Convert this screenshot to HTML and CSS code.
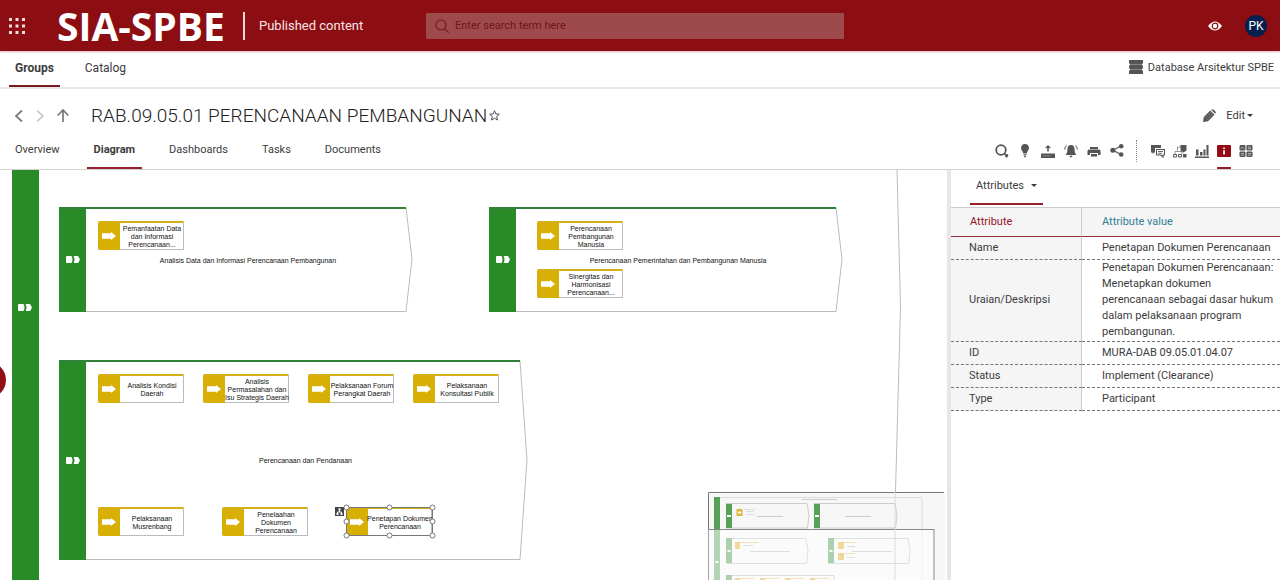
FILE: index.html
```html
<!DOCTYPE html>
<html lang="id">
<head>
<meta charset="utf-8">
<title>SIA-SPBE | Published content</title>
<link rel="stylesheet" href="styles.css">
</head>
<body>
<svg class="defs" aria-hidden="true">
  <symbol id="arrow" viewBox="0 0 14 8"><path d="M0 1.2h9V0l5 4-5 4V6.800H0z" fill="#fff"/></symbol>
  <symbol id="chain" viewBox="0 0 14 7"><path d="M1 0h4.500q2 3.500 0 7H1Q0 7 0 6V1Q0 0 1 0zM7.500 0h4q1 0 1.500 1.500L14 3.500 13 5.500Q12.500 7 11.500 7h-4q2-3.500 0-7z" fill="#fff"/></symbol>
</svg>
<div class="page">
  <header class="topbar">
    <button class="apps" aria-label="Applications">
      <svg width="16" height="16" viewBox="0 0 16 16" fill="#f6dcdc"><path d="M0 0h3v3H0zM6.500 0h3v3h-3zM13 0h3v3h-3zM0 6.500h3v3H0zM6.500 6.500h3v3h-3zM13 6.500h3v3h-3zM0 13h3v3H0zM6.500 13h3v3h-3zM13 13h3v3h-3z"/></svg>
    </button>
    <span class="logo">SIA-SPBE</span>
    <span class="section">Published content</span>
    <label class="search">
      <svg width="14" height="14" viewBox="0 0 14 14" fill="none" stroke="#741318" stroke-width="1.100"><circle cx="6" cy="6" r="5"/><path d="M9.600 9.600l4 4"/></svg>
      <input type="text" placeholder="Enter search term here" aria-label="Search">
    </label>
    <button class="eye" aria-label="View mode">
      <svg width="14" height="10" viewBox="0 0 14 10"><path d="M0 5Q7-4 14 5 7 14 0 5z" fill="#fff"/><circle cx="7" cy="5" r="2.800" fill="none" stroke="#8c0d12" stroke-width="1.200"/></svg>
    </button>
    <button class="avatar">PK</button>
  </header>

  <nav class="mainnav">
    <a class="navlink navlink-on" href="#">Groups</a>
    <a class="navlink" href="#">Catalog</a>
    <a class="database" href="#">
      <svg width="14" height="14" viewBox="0 0 14 14" fill="#555"><path d="M0 0h14v3l-1.500 1.500L14 6v2l-1.500 1.500L14 11v3H0v-3l1.500-1.500L0 8V6l1.500-1.500L0 3z"/><path d="M2 4.500h10M2 9.500h10" stroke="#999" stroke-width=".7"/></svg>
      Database Arsitektur SPBE
    </a>
  </nav>

  <section class="titlebar">
    <div class="history">
      <button aria-label="Back"><svg width="8" height="12" viewBox="0 0 8 12" fill="none" stroke="#777" stroke-width="1.700"><path d="M7 .5L1 6l6 5.500"/></svg></button>
      <button aria-label="Forward"><svg width="8" height="12" viewBox="0 0 8 12" fill="none" stroke="#ccc" stroke-width="1.700"><path d="M1 .5L7 6l-6 5.500"/></svg></button>
      <button aria-label="Up"><svg width="12" height="13" viewBox="0 0 12 13" fill="none" stroke="#777" stroke-width="1.700"><path d="M6 13V1M.7 6.500L6 1l5.300 5.500"/></svg></button>
    </div>
    <h1>RAB.09.05.01 PERENCANAAN PEMBANGUNAN</h1>
    <button class="star" aria-label="Favourite"><svg width="11" height="11" viewBox="0 0 12 12" fill="none" stroke="#444"><path d="M6 .8l1.400 3.500 3.900.3-3 2.500 1 3.900L6 8.900 2.700 11l1-3.900-3-2.500 3.900-.3z"/></svg></button>
    <button class="edit">
      <svg width="13" height="13" viewBox="0 0 13 13" fill="#555"><path d="M0 13l.8-5L7.300 1.500 11.500 5.700 5 12.200z"/><path d="M8.300.8Q9.500-.4 10.700.8l1.500 1.500q1.200 1.200 0 2.400z"/><path d="M2.200 9.200l6.500-6.500M3.800 10.800l6.500-6.500" stroke="#999" stroke-width=".6"/></svg>
      <span>Edit</span><i class="caret"></i>
    </button>
  </section>

  <section class="tabbar">
    <nav class="tabs">
      <a href="#">Overview</a>
      <a class="tab-on" href="#">Diagram</a>
      <a href="#">Dashboards</a>
      <a href="#">Tasks</a>
      <a href="#">Documents</a>
    </nav>
    <div class="tools tools-main">
      <button aria-label="Search in diagram"><svg viewBox="0 0 14 14"><circle cx="6" cy="6" r="4.800" fill="none" stroke="#555" stroke-width="1.800"/><path d="M9.500 9.500l1.500 1.500" stroke="#555" stroke-width="1.500"/><path d="M9.500 11.500h4L11.500 14z"/><path d="M10.500 10.200h2.600v2h-2.600z"/></svg></button>
      <button aria-label="Highlight"><svg viewBox="0 0 14 14"><path d="M7 0c2.500 0 4 1.800 4 4 0 2.300-2 3.300-2.200 5.500H5.200C5 7.300 3 6.300 3 4c0-2.200 1.500-4 4-4zM5.500 10.200h3v1h-3zM5.800 11.800h2.400L7 14z"/></svg></button>
      <button aria-label="Upload"><svg viewBox="0 0 14 14"><path d="M0 9.500h14V14H0z"/><path d="M7 1l3 3H7.800v3.500H6.200V4H4z"/><path d="M2 11.800h7" stroke="#999" stroke-width=".7"/></svg></button>
      <button aria-label="Notifications"><svg viewBox="0 0 14 14"><path d="M7 1c2.500 0 3.600 2 3.600 4.500 0 3 .6 4 1.900 5.500h-11C2.800 9.500 3.400 8.500 3.400 5.500 3.400 3 4.500 1 7 1zM5.500 11.700h3Q8.300 13.500 7 13.500t-1.500-1.800z"/><path d="M2.500 1.500Q.8 3 .7 5.500M11.500 1.500q1.700 1.500 1.800 4" fill="none" stroke="#555"/></svg></button>
      <button aria-label="Print"><svg viewBox="0 0 14 14"><path d="M3 3h8v2H3zM2 5.500h10q1.500 0 1.500 1.500v4H11V9H3v2H.5V7Q.5 5.500 2 5.500zM4 10h6v2.500H4z"/></svg></button>
      <button aria-label="Share"><svg viewBox="0 0 14 14"><circle cx="2.800" cy="6.300" r="2.500"/><circle cx="11.200" cy="2.300" r="2.300"/><circle cx="11.200" cy="10.500" r="2.300"/><path d="M11.200 2L2.800 6.300l8.400 4.200" fill="none" stroke="#555" stroke-width="1.200"/></svg></button>
    </div>
    <div class="tools tools-side">
      <button aria-label="Comments"><svg viewBox="0 0 14 14"><path d="M0 1h10v3H4v4.500H3L1.500 10V8.500H0z"/><path d="M5.500 5.500h8V11H12v2.200L9.800 11H5.500z" fill="#fff" stroke="#555" stroke-width="1.100"/><path d="M7 7.500h5M7 9.300h4" stroke="#555" stroke-width=".9"/></svg></button>
      <button aria-label="Object hierarchy"><svg viewBox="0 0 14 14"><path d="M7.500 1h6v5.500L10.500 8.500l-3-2z"/><path d="M8 3H4.500v3.500M2 10V7.500h7V10" fill="none" stroke="#777" stroke-width=".8"/><path d="M.6 10.500h3v2.500h-3zM5.500 10.500h3v2.500h-3z" fill="none" stroke="#555"/><path d="M10 10h3.500v3.500H10z"/></svg></button>
      <button aria-label="Statistics"><svg viewBox="0 0 14 14"><path d="M0 12.500h14V14H0zM1 5.500h2.500v6H1zM5 8h2.500v3.500H5zM8.500 5.500h2v6h-2zM11.500 1h2v10.500h-2z"/></svg></button>
      <button class="tool-on" aria-label="Attributes"><svg viewBox="0 0 14 14"><rect y="1" width="14" height="12" rx="1" fill="#930b14"/><path d="M6.200 3.500h1.700v1.600H6.200zM6.200 6.200h1.700v4.300H6.200z" fill="#fff"/></svg></button>
      <button aria-label="Matrix"><svg viewBox="0 0 14 14"><rect x=".5" y="1" width="6" height="5.500" rx="1"/><rect x="7.500" y="1" width="6" height="5.500" rx="1"/><rect x=".5" y="7.500" width="6" height="5.500" rx="1"/><rect x="7.500" y="7.500" width="6" height="5.500" rx="1"/><path d="M2 5l1.500-2 1.500 1.500M9 3h3M9 4.700h3M2 9.500h3M2 11.200h3M9 9.500h3M9 11.200h3" fill="none" stroke="#ddd" stroke-width=".7"/></svg></button>
    </div>
  </section>

  <main class="workspace">
    <div class="canvas">
      <div class="lane"><svg width="14" height="7"><use href="#chain"/></svg></div>
      <svg class="lane-edge" width="8" height="410" viewBox="0 0 8 410" fill="none" stroke="#bbb"><path d="M3 0L6.500 137 1 340V410"/></svg>
      <button class="expand" aria-label="Open explorer"></button>

      <div class="group g-analisis">
        <svg class="outline" width="354" height="105" viewBox="0 0 354 105" fill="none"><path d="M347 1l6 51-6 52.500H27" stroke="#bbb"/><path d="M0 1h347" stroke="#2f8238" stroke-width="2"/></svg>
        <div class="band"><svg width="14" height="7"><use href="#chain"/></svg></div>
        <span class="group-name">Analisis Data dan Informasi Perencanaan Pembangunan</span>
      </div>
      <div class="group g-manusia">
        <svg class="outline" width="354" height="105" viewBox="0 0 354 105" fill="none"><path d="M347 1l6 51-6 52.500H27" stroke="#bbb"/><path d="M0 1h347" stroke="#2f8238" stroke-width="2"/></svg>
        <div class="band"><svg width="14" height="7"><use href="#chain"/></svg></div>
        <span class="group-name">Perencanaan Pemerintahan dan Pembangunan Manusia</span>
      </div>
      <div class="group g-pendanaan">
        <svg class="outline" width="469" height="200" viewBox="0 0 469 200" fill="none"><path d="M461 1l7 99-7 99.500H27" stroke="#bbb"/><path d="M0 1h461" stroke="#2f8238" stroke-width="2"/></svg>
        <div class="band"><svg width="14" height="7"><use href="#chain"/></svg></div>
        <span class="group-name">Perencanaan dan Pendanaan</span>
      </div>

      <div class="node n-pemanfaatan"><div class="chip"><svg width="14" height="8"><use href="#arrow"/></svg></div><span>Pemanfaatan Data<br>dan Informasi<br>Perencanaan...</span></div>
      <div class="node n-perencanaan"><div class="chip"><svg width="14" height="8"><use href="#arrow"/></svg></div><span>Perencanaan<br>Pembangunan<br>Manusia</span></div>
      <div class="node n-sinergitas"><div class="chip"><svg width="14" height="8"><use href="#arrow"/></svg></div><span>Sinergitas dan<br>Harmonisasi<br>Perencanaan...</span></div>
      <div class="node n-kondisi"><div class="chip"><svg width="14" height="8"><use href="#arrow"/></svg></div><span>Analisis Kondisi<br>Daerah</span></div>
      <div class="node n-isu"><div class="chip"><svg width="14" height="8"><use href="#arrow"/></svg></div><span>Analisis<br>Permasalahan dan<br>Isu Strategis Daerah</span></div>
      <div class="node n-forum"><div class="chip"><svg width="14" height="8"><use href="#arrow"/></svg></div><span>Pelaksanaan Forum<br>Perangkat Daerah</span></div>
      <div class="node n-publik"><div class="chip"><svg width="14" height="8"><use href="#arrow"/></svg></div><span>Pelaksanaan<br>Konsultasi Publik</span></div>
      <div class="node n-musrenbang"><div class="chip"><svg width="14" height="8"><use href="#arrow"/></svg></div><span>Pelaksanaan<br>Musrenbang</span></div>
      <div class="node n-penelaahan"><div class="chip"><svg width="14" height="8"><use href="#arrow"/></svg></div><span>Penelaahan<br>Dokumen<br>Perencanaan</span></div>
      <div class="node n-penetapan"><div class="chip"><svg width="14" height="8"><use href="#arrow"/></svg></div><span>Penetapan Dokumen<br>Perencanaan</span></div>
      <svg class="selection" width="104" height="36" viewBox="0 0 104 36">
        <rect x="14.500" y="4.500" width="86" height="28" fill="none" stroke="#777"/>
        <rect x="3" y="4" width="9" height="9" fill="#444"/><path d="M7.500 6v3M5.500 11V9h4v2" fill="none" stroke="#fff"/><path d="M6.500 5.200h2v2h-2zM4.500 10h2v2h-2zM8.500 10h2v2h-2z" fill="#fff"/>
        <g fill="#fff" stroke="#777"><circle cx="14.500" cy="4.500" r="2.500"/><circle cx="57.500" cy="4.500" r="2.500"/><circle cx="100.500" cy="4.500" r="2.500"/><circle cx="14.500" cy="18.500" r="2.500"/><circle cx="100.500" cy="18.500" r="2.500"/><circle cx="14.500" cy="32.500" r="2.500"/><circle cx="57.500" cy="32.500" r="2.500"/><circle cx="100.500" cy="32.500" r="2.500"/></g>
      </svg>

      <svg class="minimap" width="237" height="88" viewBox="0 0 237 88" fill="none">
        <rect width="237" height="88" fill="#f6f6f6" fill-opacity=".9"/>
        <path d="M.5 88V.5H236" stroke="#777"/>
        <path d="M12 5.500h202v83" stroke="#ddd"/>
        <path d="M18 11.500h81l2 12-1.500 12.500H18M106 11.500h81l2 12-1.500 12.500H106" stroke="#c5d2c5"/>
        <path d="M6 5h6v83H6zM18 12h6v24h-6zM106 12h6v24h-6z" fill="#55a158"/>
        <path d="M19 23h4v2h-4zM107 23h4v2h-4z" fill="#fff"/>
        <path d="M28.500 17h6v7h-6z" fill="#ddb43c"/><path d="M30 19.500h3v2h-3z" fill="#fff"/>
        <path d="M36 17.500h12M38 19.500h8M38 22.500h8" stroke="#ddd"/>
        <path d="M49 24.500h26M137 24.500h26M94 7.500h35" stroke="#ccc"/>
        <rect x="0" y="37.500" width="226" height="60" fill="#fff" fill-opacity=".55" stroke="#888"/>
        <path d="M18 46.500h80l2 12-1.500 13H18M120 46.500h80l2 12-1.500 13H120M18 83.500h108v5" stroke="#dbe2db"/>
        <path d="M18 46h6v25h-6zM120 46h6v25h-6zM18 83h6v5h-6z" fill="#abd0ad"/>
        <path d="M27 50h5v7h-5zM130 50h6v7h-6zM130 61h6v7h-6zM27 86h5v2h-5zM52 86h5v2h-5zM77 86h5v2h-5zM102 86h5v2h-5z" fill="#f0d79b"/>
        <path d="M32 50.500h18M136 50.500h13M136 61.500h13M32 86.500h14M57 86.500h14M82 86.500h14M107 86.500h14" stroke="#f3e3bb"/>
        <path d="M42 59.500h40M144 59.500h40M35 53.500h10M139 54.500h8M139 65.500h8" stroke="#ddd"/>
        <path d="M19.500 58h3v2h-3zM121.500 58h3v2h-3zM7.500 69h3v2h-3z" fill="#fff"/>
        <path d="M187 0v88" stroke="#ddd"/>
      </svg>
    </div>

    <aside class="panel">
      <button class="panel-tab">Attributes<i class="caret"></i></button>
      <table class="attributes">
        <thead><tr><th scope="col">Attribute</th><th scope="col">Attribute value</th></tr></thead>
        <tbody>
          <tr><th scope="row">Name</th><td>Penetapan Dokumen Perencanaan</td></tr>
          <tr><th scope="row">Uraian/Deskripsi</th><td>Penetapan Dokumen Perencanaan: Menetapkan dokumen perencanaan sebagai dasar hukum dalam pelaksanaan program pembangunan.</td></tr>
          <tr><th scope="row">ID</th><td>MURA-DAB 09.05.01.04.07</td></tr>
          <tr><th scope="row">Status</th><td>Implement (Clearance)</td></tr>
          <tr><th scope="row">Type</th><td>Participant</td></tr>
        </tbody>
      </table>
    </aside>
  </main>
</div>
</body>
</html>
```
FILE: styles.css
```css
* { box-sizing: border-box; }
body {
  margin: 0;
  font-family: Roboto, "Liberation Sans", sans-serif;
  font-size: 11px;
  color: #3c3c3c;
  background: #fff;
}
button {
  display: flex;
  align-items: center;
  padding: 0;
  border: 0;
  background: none;
  font: inherit;
  color: inherit;
  cursor: pointer;
}
a { color: inherit; text-decoration: none; }
svg { display: block; flex: none; }
.defs { position: absolute; width: 0; height: 0; }
.page { display: flex; flex-direction: column; height: 100vh; overflow: hidden; }
.caret {
  border: 3px solid transparent;
  border-top-color: currentColor;
  border-bottom: 0;
}

/* Top bar */
.topbar {
  display: flex;
  align-items: center;
  flex: none;
  height: 51px;
  padding: 0 13px 0 9px;
  background: #8c0d12;
  color: #fff;
  box-shadow: 0 1px 2px #e3b0b4;
}
.apps { width: 48px; }
.logo {
  width: 186px;
  font-family: "Open Sans", sans-serif;
  font-size: 39px;
  font-weight: 700;
  line-height: 48px;
  white-space: nowrap;
}
.section {
  width: 183px;
  padding-left: 14px;
  border-left: 2px solid #f3d3d3;
  font-size: 13px;
  line-height: 28px;
  color: #fbe6e6;
}
.search {
  display: flex;
  align-items: center;
  gap: 6px;
  flex: 0 1 418px;
  height: 26px;
  padding: 0 9px;
  border-radius: 1px;
  background: #9e4a4c;
}
.search input {
  flex: 1;
  min-width: 0;
  padding: 0;
  border: 0;
  outline: 0;
  background: none;
  font: inherit;
  color: #741318;
}
.search input::placeholder { color: #741318; opacity: 1; }
.eye { margin-left: auto; }
.avatar {
  justify-content: center;
  width: 22px;
  height: 22px;
  margin-left: 23px;
  border-radius: 50%;
  background: #06204d;
  color: #fff;
  font-size: 12px;
}

/* Main navigation */
.mainnav {
  display: flex;
  flex: none;
  height: 38px;
  padding: 0 6px 0 9px;
  border-bottom: 2px solid #e8e8e8;
}
.navlink { padding: 10px 6px 0; margin-right: 19px; border-bottom: 2px solid transparent; font-size: 12px; }
.navlink-on { font-weight: 700; border-color: #7a1a20; }
.database { display: flex; align-items: center; gap: 5px; margin-left: auto; padding-bottom: 4px; }

/* Title row */
.titlebar {
  display: flex;
  align-items: center;
  flex: none;
  height: 42px;
  padding: 11px 27px 0 15px;
}
.history { display: flex; gap: 13px; width: 76px; }
h1 { margin: 0; font-size: 19px; font-weight: 300; line-height: 28px; color: #222; white-space: nowrap; }
.star { margin-left: 2px; }
.edit { margin-left: auto; gap: 2px; }
.edit span { margin-left: 8px; }

/* Tabs and tools */
.tabbar {
  display: flex;
  flex: none;
  height: 39px;
  padding: 0 27px 0 8px;
  border-bottom: 1px solid #d2d2d2;
}
.tabs { display: flex; gap: 20px; margin-right: auto; }
.tabs a { padding: 12px 7px 0; border-bottom: 2px solid transparent; }
.tabs .tab-on { font-weight: 700; border-color: #93202a; }
.tools { display: flex; fill: #555; }
.tools button { width: 14px; padding-top: 3px; border-bottom: 2px solid transparent; }
.tools svg { width: 14px; height: 14px; }
.tools-main { gap: 9px; }
.tools-side { gap: 8px; position: relative; margin-left: 27px; }
.tools-side::before {
  content: "";
  position: absolute;
  left: -15px;
  top: 9px;
  height: 22px;
  border-left: 1px dotted #888;
}
.tools .tool-on { border-color: #93202a; }

/* Diagram */
.workspace { display: flex; flex: 1; min-height: 0; }
.canvas {
  position: relative;
  flex: 1;
  overflow: hidden;
  font-family: "Liberation Sans", Arial, sans-serif;
  font-size: 7px;
  line-height: 8px;
  color: #111;
}
.lane {
  position: absolute;
  left: 12px;
  top: 0;
  bottom: 0;
  width: 27px;
  padding: 134px 6px 0;
  background: #288b28;
}
.lane-edge { position: absolute; left: 894px; top: 0; }
.expand {
  position: absolute;
  left: -30px;
  top: 192px;
  width: 36px;
  height: 36px;
  border-radius: 50%;
  background: #930f16;
}
.group { position: absolute; display: flex; }
.g-analisis { left: 59px; top: 37px; width: 353px; height: 105px; }
.g-manusia { left: 489px; top: 37px; width: 353px; height: 105px; }
.g-pendanaan { left: 59px; top: 190px; width: 468px; height: 200px; }
.outline { position: absolute; left: 0; top: 0; }
.band {
  display: flex;
  align-items: center;
  justify-content: center;
  width: 27px;
  background: #288b28;
}
.group-name { flex: 1; align-self: center; padding: 2px 2px 0 0; text-align: center; }
.node {
  position: absolute;
  display: flex;
  width: 86px;
  height: 29px;
  border: 1px solid #bbb;
  border-width: 2px 1px 1px 0;
  border-top-color: #d5af14;
  border-radius: 2px 0 0 2px;
  background: #fff;
}
.chip {
  display: flex;
  align-items: center;
  justify-content: center;
  flex: none;
  width: 22px;
  margin-bottom: -1px;
  padding-bottom: 2px;
  border-radius: 0 0 0 2px;
  background: #d8b005;
}
.node span { flex: 1; align-self: center; display: flex; justify-content: center; padding: 2px 0 0 1px; text-align: center; white-space: nowrap; min-width: 0; }
.n-pemanfaatan { left: 98px; top: 51px; }
.n-perencanaan { left: 537px; top: 51px; }
.n-sinergitas { left: 537px; top: 99px; }
.n-kondisi { left: 98px; top: 204px; }
.n-isu { left: 203px; top: 204px; }
.n-forum { left: 308px; top: 204px; }
.n-publik { left: 413px; top: 204px; }
.n-musrenbang { left: 98px; top: 337px; }
.n-penelaahan { left: 222px; top: 337px; }
.n-penetapan { left: 346px; top: 337px; }
.selection { position: absolute; left: 332px; top: 333px; }
.minimap { position: absolute; right: 2px; bottom: 0; }

/* Attribute panel */
.panel { flex: none; width: 333px; border-left: 4px solid #e6e6e6; }
.panel-tab {
  gap: 7px;
  height: 35px;
  margin: 0 0 2px 19px;
  padding: 0 6px 2px;
  border-bottom: 2px solid #93202a;
}
.attributes { width: 100%; border-spacing: 0; table-layout: fixed; line-height: 16px; }
.attributes th, .attributes td { padding: 3px 5px 3px 20px; border-bottom: 1px dashed #777; text-align: left; font-weight: 400; }
.attributes tr > :first-child { width: 131px; padding-left: 18px; background: #f5f5f5; border-right: 1px solid #ccc; }
.attributes thead th { height: 30px; background: #f5f5f5; border-top: 1px solid #ccc; border-bottom: 1px solid #93303a; color: #2f7f93; }
.attributes thead tr > :first-child { color: #98121f; padding-left: 19px; }
.attributes tbody tr:nth-child(2) > * { padding-top: 0; padding-bottom: 1px; }
```
